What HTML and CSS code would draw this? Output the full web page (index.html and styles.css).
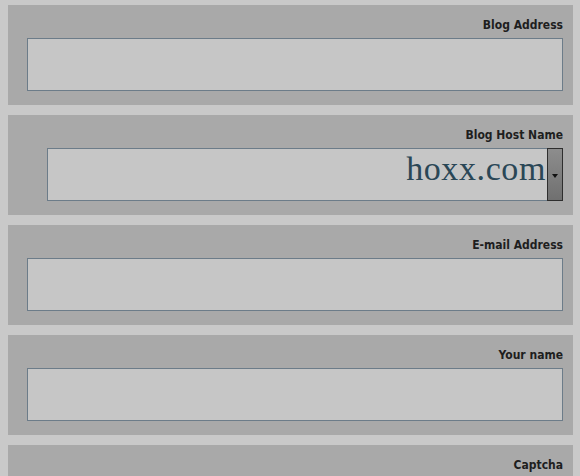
FILE: index.html
```html
<!DOCTYPE html>
<html>
<head>
<meta charset="utf-8">
<link rel="stylesheet" href="styles.css">
</head>
<body>
<form class="form">
  <div class="panel">
    <label class="label">Blog Address</label>
    <div class="field"></div>
  </div>
  <div class="panel">
    <label class="label">Blog Host Name</label>
    <div class="select">
      <span class="select-value">hoxx.com</span>
      <span class="select-btn"><span class="arrow"></span></span>
    </div>
  </div>
  <div class="panel">
    <label class="label">E-mail Address</label>
    <div class="field"></div>
  </div>
  <div class="panel">
    <label class="label">Your name</label>
    <div class="field"></div>
  </div>
  <div class="panel">
    <label class="label">Captcha</label>
    <div class="field"></div>
  </div>
</form>
</body>
</html>
```
FILE: styles.css
```css
html, body {
  margin: 0;
  padding: 0;
  background: #c9c9c9;
  height: 100%;
  overflow: hidden;
}
body {
  padding: 5px 7px 0 8px;
  font-family: "DejaVu Sans Condensed", "DejaVu Sans", sans-serif;
}
.form {
  display: flex;
  flex-direction: column;
  gap: 10px;
}
.panel {
  height: 100px;
  box-sizing: border-box;
  background: #a9a9a9;
  padding: 12px 10px 0 19px;
  display: flex;
  flex-direction: column;
  flex-shrink: 0;
}
.label {
  align-self: flex-end;
  font-size: 12px;
  font-weight: bold;
  line-height: 16px;
  color: #1e1e1e;
  margin-bottom: 5px;
}
.field {
  height: 53px;
  box-sizing: border-box;
  border: 1px solid #6c7c89;
  background: #c6c6c6;
}
.select {
  height: 53px;
  box-sizing: border-box;
  margin-left: 20px;
  border: 1px solid #6c7c89;
  border-right: none;
  background: #c6c6c6;
  display: flex;
  justify-content: flex-end;
  align-items: flex-start;
}
.select-value {
  font-family: "Liberation Serif", serif;
  font-size: 34px;
  letter-spacing: 0.6px;
  color: #2a4756;
  padding-right: 1px;
  line-height: 1;
  margin-top: 3px;
}
.select-btn {
  align-self: stretch;
  width: 16px;
  margin: -1px 0;
  box-sizing: border-box;
  border: 1px solid #2e2e2e;
  background: linear-gradient(#8d8d8d, #707070);
  display: flex;
  align-items: center;
  justify-content: center;
}
.arrow {
  width: 0;
  height: 0;
  border-left: 3px solid transparent;
  border-right: 3px solid transparent;
  border-top: 4px solid #111;
  margin-top: 2px;
}
```
